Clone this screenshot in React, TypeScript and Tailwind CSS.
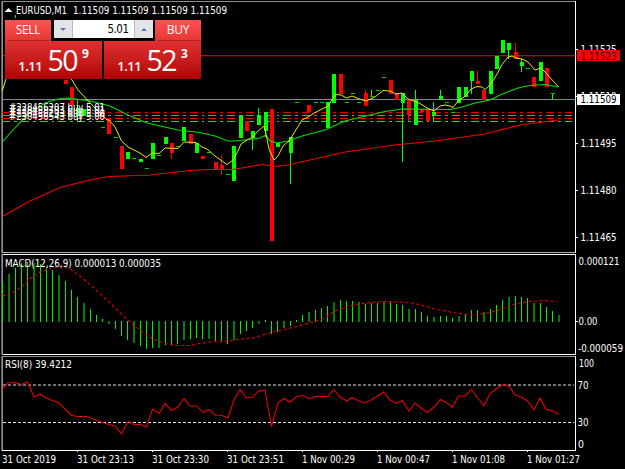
import React from "react";

type Candle = {
  i: number;
  top: number;
  bottom: number;
  color?: "r" | "g";
  high?: number;
  low?: number;
};

const FONT = "'DejaVu Sans Condensed', 'DejaVu Sans', Tahoma, sans-serif";

const barX = (i: number) => Math.floor(2.5 + i * 6.25);

// [bar, body top, body bottom, color, wick top, wick bottom]
const rawCandles: [number, number, number, "r" | "g", number?, number?][] = [
  [10, 80, 84, "r"], [11, 87, 106, "r"], [12, 108, 116, "g", 100, 122], [13, 109, 116, "g"],
  [16, 127, 128, "g"], [17, 118, 134, "r"], [18, 137, 138, "g"], [19, 146, 169, "r"],
  [20, 152, 159, "g"], [21, 158, 159, "g"], [22, 159, 162, "g"], [23, 168, 169, "g"],
  [24, 143, 159, "g"], [25, 155, 156, "g"], [26, 137, 144, "g"], [27, 143, 153, "r", 143, 159],
  [28, 146, 147, "g"], [29, 127, 141, "g"], [30, 134, 144, "r"], [31, 143, 153, "g"],
  [32, 156, 159, "r"], [33, 152, 153, "g"], [34, 162, 169, "r"], [35, 165, 169, "r", 155, 175],
  [36, 174, 175, "g"], [37, 146, 181, "g"], [38, 115, 138, "g"], [39, 121, 131, "r"],
  [40, 131, 138, "g", 131, 150], [41, 115, 125, "g", 108, 125], [42, 112, 131, "g", 112, 137],
  [43, 109, 241, "r"], [44, 143, 147, "g"], [45, 118, 119, "g"], [46, 137, 153, "g", 137, 184],
  [47, 102, 103, "g"], [48, 99, 100, "g"], [49, 105, 112, "r"], [50, 102, 103, "g"],
  [51, 102, 103, "g"], [52, 102, 128, "g"], [53, 74, 103, "g"], [54, 74, 94, "r"],
  [55, 102, 103, "g"], [56, 93, 94, "g"], [57, 102, 103, "g"], [58, 93, 106, "r", 90, 106],
  [59, 96, 97, "g", 90, 97], [60, 90, 91, "g"], [61, 77, 78, "g"], [62, 80, 94, "r"],
  [63, 93, 100, "r"], [64, 93, 103, "g", 93, 162], [65, 99, 115, "r", 99, 121],
  [66, 100, 125, "g", 90, 125], [67, 109, 112, "r"], [68, 109, 121, "r"],
  [69, 112, 116, "g", 102, 121], [70, 96, 100, "g", 90, 100], [71, 102, 103, "g"],
  [72, 112, 113, "g"], [73, 87, 103, "g"], [74, 87, 97, "g"], [75, 71, 81, "g", 71, 94],
  [76, 81, 84, "r", 71, 84], [77, 90, 100, "r"], [78, 71, 94, "g"], [79, 56, 69, "g"],
  [80, 40, 53, "g"], [81, 43, 50, "g", 43, 59], [82, 52, 59, "r", 43, 59],
  [83, 62, 66, "g", 59, 72], [84, 68, 69, "g"], [85, 77, 87, "r"], [86, 62, 81, "g"],
  [87, 68, 87, "r"], [88, 93, 94, "g", 93, 100], [89, 99, 100, "g"],
];

const candles: Candle[] = rawCandles.map(([i, top, bottom, color, high, low]) => ({
  i, top, bottom, color, high, low,
}));

const fastMa =
  "2.3,91 5,82 8,74 40,40 72,80 78,90 95,108 107,120 109,120 115,127 121.5,141 128,147 140,153 146,157.5 152,153 159,153.5 165,148 178,148.5 184,142 196,142.5 202,147 207,149 215,156 227,164.5 233,160 238,151 241,144 247,140 253,137 257,132 264,126 266,134 269,149 274,160 278,156 283,146 289,141 294,133 302,120 308,117 316,112 328,106 333,98 336,94.5 341,95 346.5,98 352,96 358,98.5 366,101 375,97 383,90.5 390,91 396,94 402,93 408,99 414,101 420,103.5 428,108.5 434,111 440,106 445,105 450,106 453,107.5 459,100 465,96.5 471,89 477,86.5 482,87 485,89.5 491,84 497,74 502,64.5 508,57 512,56 516,58 522,59 528,62 535,70 541,68 546,73 558.5,87";
const midMa =
  "2.3,142 14,129 28,114 45,103 58,99 68,98 90,101 110,106 128,115 147,123 178,130 200,132.5 215,136 228,141 235,141 253,139 260,138 266,135 270,141 277,143 288,141 302,136 325,130 345,121 370,115 385,111.5 402,109 450,109.5 462,107 475,103 490,100 500,95 510,91 520,87.5 530,85.5 545,84.5 558,87";
const slowMa =
  "2.3,216.5 28,202 60,187.5 90,180 109,176.5 150,175 190,170.5 209,169.5 233,169.5 262,164.5 275,166.5 288,165 310,160 345,152 387,146 400,144.5 435,141 485,134 520,125 558,120";

const macdBars = [
  282, 274, 268, 263, 262, 263, 264, 267, 270, 275, 281, 290, 297, 303, 309, 315, 319, 324, 329, 336,
  340, 343, 346, 349, 348, 348, 345, 345, 344, 340, 339, 338, 339, 339, 341, 342, 344, 340, 334, 331,
  328, 324, 320, 334, 332, 328, 326, 320, 315, 312, 310, 308, 306, 302, 300, 301, 301, 302, 304, 303,
  303, 301, 302, 304, 305, 309, 309, 312, 316, 317, 316, 316, 318, 316, 314, 310, 310, 312, 309, 305,
  300, 297, 296, 297, 298, 303, 303, 307, 311, 315,
];
const signal =
  "2.3,296 12,293 20,288 30,279 40,272 50,268.5 62,266 70,269 80,276 95,289 105,298 115,308 130,322 141,331 153,339 165,343.5 175,345.5 190,345.5 200,343.5 213,341.5 229,341 237,339.5 255,337.5 262,335 278,331 295,327 309,323 323,319 335,311 350,306 365,303 383,301.5 402,302 415,303.5 435,309 455,313 475,315 490,312.5 505,308 515,304 530,301.5 545,300.5 557,302";

const rsi =
  "2.3,389.5 8,383 15,382.5 21.5,384.5 27.5,382 34,397 40,394 46,398 59,403 71,415 77,416.5 87,416.5 100,421.5 107,424 115,426 121.5,434 128,421.5 134,424.5 141,424.5 146.5,427 152.5,409 159,413.5 165,403.5 171.5,410.5 178,407 184,398.5 190,406 197,406 203,412.5 209,409.5 215,415 222,415.5 228,418 234,400 240,389.5 246,397.5 252.5,397.5 258,391.5 265,390 271.5,426.5 278,403 284,398.5 290,402 297,396.5 303,395.5 309,399 315,396.5 328,396.5 334,389.5 340,397 347,401 352,397.5 359,401 364.5,403 371,400 377,396.5 383.5,392 390,400 396.5,403.5 402.5,400.5 409,411 415,403 421,408 427.5,412.5 434,407 440.5,399.5 447,403 452.5,407.5 458.5,396 465,396 471.5,389.5 477,397 484,405.5 490,393.5 496,389 502.5,385 509,386 515,395 521,397 527,400.5 534,410 540,398 546,409 553,411 558.5,414";

const orders = [
  { y: 112, color: "#d00000" },
  { y: 115, color: "#1ec81e" },
  { y: 118, color: "#ff0000" },
  { y: 121, color: "#32cd32" },
];

// labels of neighbouring orders run into each other, as the terminal draws them
const orderLabels = [
  { y: 111, text: "#228456207 buy 5.01" },
  { y: 114, text: "#228458793 buy 5.01" },
  { y: 117, text: "#230456293 buy 5.00" },
  { y: 120, text: "#230456543 buy 5.00" },
];

const times = [
  { x: 2, w: 54, text: "31 Oct 2019" },
  { x: 77, w: 57, text: "31 Oct 23:13" },
  { x: 152, w: 57, text: "31 Oct 23:30" },
  { x: 227, w: 57, text: "31 Oct 23:51" },
  { x: 302, w: 53, text: "1 Nov 00:29" },
  { x: 377, w: 53, text: "1 Nov 00:47" },
  { x: 452, w: 53, text: "1 Nov 01:08" },
  { x: 527, w: 53, text: "1 Nov 01:27" },
];

const Label = ({ x, y, w, fill = "#fff", children }: { x: number; y: number; w: number; fill?: string; children: string }) => (
  <text x={x} y={y} fill={fill} fontSize="10" fontFamily={FONT} textLength={w} lengthAdjust="spacingAndGlyphs">
    {children}
  </text>
);

const PriceChart = () => (
  <svg className="block" width="625" height="253" viewBox="0 0 625 253">
    <g shapeRendering="crispEdges">
      <rect x="2" y="1" width="574" height="1" fill="#909090" />
      <rect x="1" y="1" width="1" height="252" fill="#606060" />
      <rect x="2" y="1" width="1" height="252" fill="#909090" />
      <rect x="2" y="252" width="574" height="1" fill="#b0b0b0" />
      <rect x="3" y="55" width="572" height="1" fill="#c00000" />
      <rect x="3" y="56" width="572" height="1" fill="#400000" />
      <rect x="3" y="99" width="572" height="1" fill="#778899" />
      {orders.map((o) => (
        <line key={o.y} x1="2" x2="572" y1={o.y + 0.5} y2={o.y + 0.5} stroke={o.color} strokeDasharray="8 4 2.75 4" />
      ))}
      {candles.map((c) => {
        const fill = c.color === "r" ? "#ff0000" : "#00ff00";
        return (
          <g key={c.i} fill={fill}>
            {c.high !== undefined && c.low !== undefined && (
              <rect x={barX(c.i)} y={c.high} width="1" height={c.low - c.high} />
            )}
            <rect
              x={barX(c.i) - 1}
              y={c.top}
              width="4"
              height={c.bottom - c.top}
              fill={c.bottom - c.top === 1 ? "#00d000" : fill}
            />
          </g>
        );
      })}
      <rect x="15" y="15" width="1" height="3" fill="#00ff00" />
    </g>
    <g fill="none" strokeWidth="1">
      <polyline points={slowMa} stroke="#f00000" strokeWidth="1.2" />
      <polyline points={midMa} stroke="#00e000" strokeWidth="1.1" />
      <polyline points={fastMa} stroke="#e8e810" />
    </g>
    <polygon points="4.5,12 8.5,8 12.5,12" fill="#fff" />
    <Label x={16} y={13.5} w={51}>EURUSD,M1</Label>
    <Label x={73} y={13.5} w={154}>1.11509 1.11509 1.11509 1.11509</Label>
    {orderLabels.map((o) => (
      <Label key={o.y} x={9} y={o.y} w={96}>{o.text}</Label>
    ))}
    <rect x="575" y="1" width="1" height="252" fill="#fff" />
    {[49, 96, 143, 190, 237].map((y) => (
      <rect key={y} x="576" y={y} width="2" height="1" fill="#fff" />
    ))}
    <Label x={580.5} y={53} w={36}>1.11525</Label>
    <Label x={580.5} y={100} w={36}>1.11510</Label>
    <Label x={580.5} y={147} w={36}>1.11495</Label>
    <Label x={580.5} y={194} w={36}>1.11480</Label>
    <Label x={580.5} y={241} w={36}>1.11465</Label>
    <rect x="577" y="50" width="43" height="11" fill="#ff0000" />
    <Label x={580.5} y={59.5} w={36} fill="#200000">1.11523</Label>
    <rect x="577" y="94" width="43" height="11" fill="#fff" />
    <Label x={580.5} y={103} w={36} fill="#000">1.11509</Label>
  </svg>
);

const MacdChart = () => (
  <svg className="block" width="625" height="102" viewBox="0 253 625 102">
    <g shapeRendering="crispEdges">
      <rect x="2" y="254" width="574" height="1" fill="#fff" />
      <rect x="2" y="354" width="574" height="1" fill="#fff" />
      <rect x="1" y="254" width="1" height="101" fill="#606060" />
      <rect x="2" y="254" width="1" height="101" fill="#909090" />
      <rect x="575" y="254" width="1" height="101" fill="#fff" />
      <rect x="576" y="321" width="2" height="1" fill="#fff" />
      {macdBars.map((y, i) => (
        <rect
          key={i}
          x={barX(i)}
          y={Math.min(y, 321)}
          width={i % 4 === 1 ? 2 : 1}
          height={y < 321 ? 322 - y : y - 321}
          fill={i % 4 === 1 ? "#008000" : "#00f000"}
        />
      ))}
    </g>
    <polyline points={signal} fill="none" stroke="#e80000" strokeWidth="1.1" strokeDasharray="3 2.5" />
    <Label x={5} y={266.5} w={156}>MACD(12,26,9) 0.000013 0.000035</Label>
    <Label x={578.5} y={265} w={41}>0.000121</Label>
    <Label x={578.5} y={325} w={19}>0.00</Label>
    <Label x={578} y={352} w={45}>-0.000059</Label>
  </svg>
);

const RsiChart = () => (
  <svg className="block" width="625" height="97" viewBox="0 355 625 97">
    <g shapeRendering="crispEdges">
      <rect x="2" y="356" width="574" height="1" fill="#909090" />
      <rect x="1" y="356" width="1" height="95" fill="#606060" />
      <rect x="2" y="356" width="1" height="95" fill="#909090" />
      <rect x="575" y="356" width="1" height="95" fill="#fff" />
      <rect x="2" y="450" width="574" height="1" fill="#fff" />
      {[75, 150, 225, 300, 375, 450, 525].map((x) => (
        <rect key={x} x={x + 2} y="450" width="1" height="2" fill="#fff" />
      ))}
      <line x1="3" x2="574" y1="385" y2="385" stroke="#707070" strokeWidth="2" strokeDasharray="3 2" />
      <line x1="3" x2="574" y1="422.5" y2="422.5" stroke="#e8e8e8" strokeDasharray="3 2" />
    </g>
    <polyline points={rsi} fill="none" stroke="#e80000" strokeWidth="1.1" />
    <Label x={5} y={368} w={67}>RSI(8) 39.4212</Label>
    <Label x={579} y={366.5} w={15}>100</Label>
    <Label x={577.5} y={388.5} w={11}>70</Label>
    <Label x={577.5} y={426} w={11}>30</Label>
    <Label x={578} y={448} w={6}>0</Label>
  </svg>
);

const TimeAxis = () => (
  <svg className="block" width="625" height="17" viewBox="0 452 625 17">
    {times.map((t) => (
      <Label key={t.x} x={t.x} y={463} w={t.w}>{t.text}</Label>
    ))}
  </svg>
);

interface QuoteProps {
  base: string;
  pips: string;
  point: string;
}

const Quote: React.FC<QuoteProps> = ({ base, pips, point }) => (
  <div className="flex h-[38px] w-[97px] items-baseline justify-center bg-linear-to-b from-[#e03030] to-[#b00000] font-['Open_Sans'] leading-[38px] text-white">
    <span className="text-[13px] font-semibold tracking-[-0.4px]">{base}</span>
    <span className="ml-[5px] text-[28.5px] tracking-[-1.5px]">{pips}</span>
    <span className="relative top-[-13px] ml-[5px] text-[12px] font-bold">{point}</span>
  </div>
);

const TradeButton = ({ children }: { children: string }) => (
  <button className="flex h-[21px] w-[46px] flex-col items-center bg-linear-to-b from-[#ff5252] to-[#e63535] font-['Open_Sans'] text-[12px] leading-[20px] tracking-[-0.3px] text-white">
    {children}
    <span className="block h-px w-[41px] shrink-0 bg-[#b02020]" />
  </button>
);

// One-click trading box that floats over the chart
const TradePanel = () => (
  <div className="absolute left-[5px] top-[20px] w-[196px] bg-black">
    <div className="flex justify-between">
      <TradeButton>SELL</TradeButton>
      <div className="flex h-[18px] w-[99px] bg-white">
        <div className="flex w-[19px] items-center justify-center border-r border-[#b8b8b8] bg-[#e4e4e8]">
          <svg width="6" height="3" viewBox="0 0 6 3"><path d="M0 0h6L3 3z" fill="#5878c0" /></svg>
        </div>
        <span className="flex-1 pr-[5px] text-right font-['DejaVu_Sans_Condensed'] text-[11.5px] leading-[19px] tracking-[-0.5px] text-black">5.01</span>
        <div className="flex w-[19px] items-center justify-center border-l border-[#b8b8b8] bg-[#e4e4e8]">
          <svg width="6" height="3" viewBox="0 0 6 3"><path d="M0 3h6L3 0z" fill="#5878c0" /></svg>
        </div>
      </div>
      <TradeButton>BUY</TradeButton>
    </div>
    <div className="flex justify-between">
      <Quote base="1.11" pips="50" point="9" />
      <Quote base="1.11" pips="52" point="3" />
    </div>
  </div>
);

export default function App() {
  return (
    <div className="relative flex h-[469px] w-[625px] flex-col overflow-hidden bg-black">
      <PriceChart />
      <MacdChart />
      <RsiChart />
      <TimeAxis />
      <TradePanel />
    </div>
  );
}
